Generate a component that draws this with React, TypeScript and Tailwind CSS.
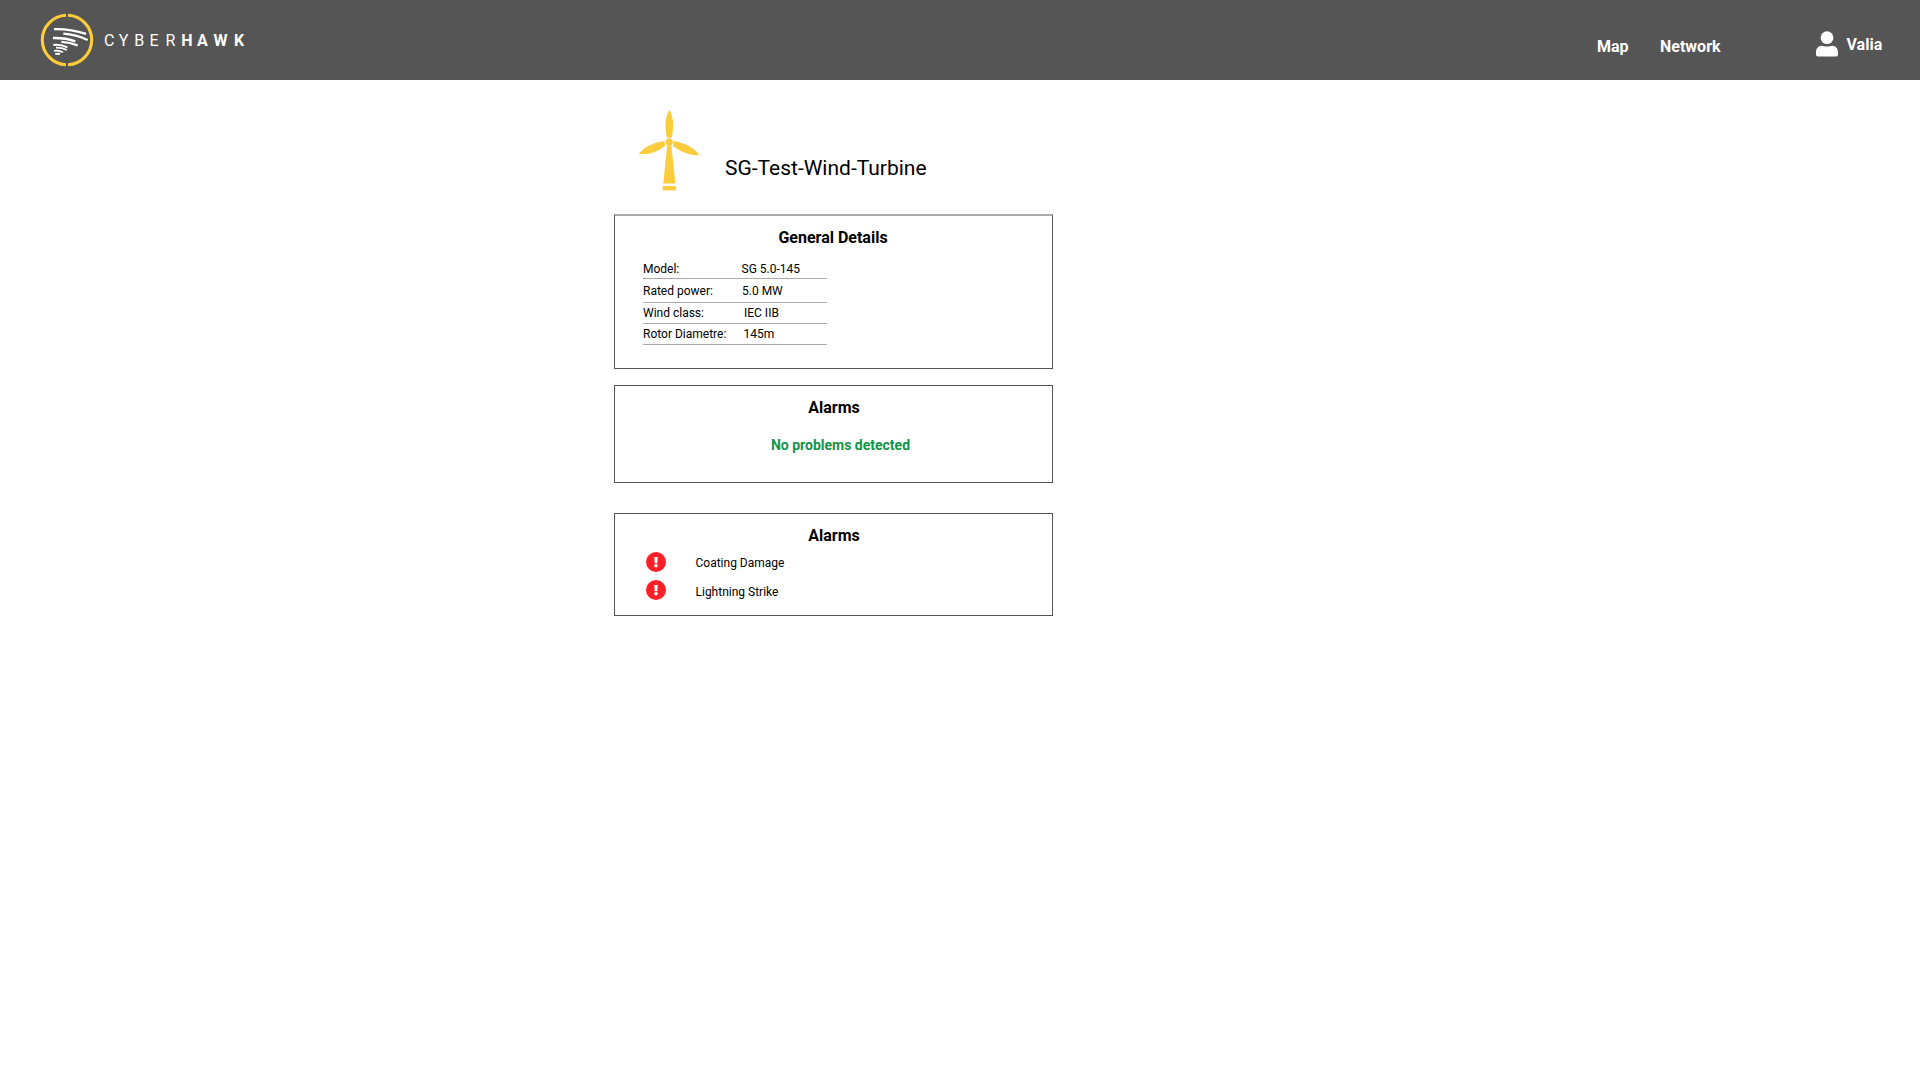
import React from "react";

const details = [
  { label: "Model:", value: "SG 5.0-145", row: "h-[18px]", gap: "ml-[98.5px]" },
  { label: "Rated power:", value: "5.0 MW", row: "h-6 pt-[4px]", gap: "ml-[99px]" },
  { label: "Wind class:", value: "IEC IIB", row: "h-[21px] pt-[2px]", gap: "ml-[101px]" },
  { label: "Rotor Diametre:", value: "145m", row: "h-[21px] pt-[2px]", gap: "ml-[100.5px]" },
];

function Logo() {
  return (
    <svg width="220" height="60" viewBox="0 0 220 60" className="ml-10 mt-[10px] shrink-0">
      <g fill="none" stroke="#ffcb38" strokeWidth="3.1">
        <path d="M26 5.320A24.7 24.7 0 0 0 26 54.680" />
        <path d="M28 5.320A24.7 24.7 0 0 1 28 54.680" />
      </g>
      <g fill="none" stroke="#fff" strokeWidth="2.3">
        <path d="M14 19.100Q30 18.600 46 23.800" />
        <path d="M23.300 23.600Q36 24.400 47.600 30" />
        <path d="M13 28Q26 27.800 35.400 31.400" />
        <path d="M21.400 31.800Q30 32.200 37.600 35.400" />
        <path d="M13.300 34.900Q21 34.200 27.400 37.300" strokeWidth="2" />
        <path d="M16 37.700Q22 37.600 26.800 40" strokeWidth="1.8" />
        <path d="M14 40.800Q19 40 23 42.300" strokeWidth="1.8" />
        <path d="M15.200 44.200Q17.500 43.400 20 44" strokeWidth="1.9" />
      </g>
      <g fill="#fff" fontFamily="Roboto, sans-serif" fontSize="16">
        <text y="35.800" x="64 78.700 94.200 109.400 125.500" fontWeight="400">CYBER</text>
        <text y="35.800" x="141.200 156.900 173.600 194" fontWeight="700">HAWK</text>
      </g>
    </svg>
  );
}

function Turbine() {
  return (
    <svg width="62" height="82" viewBox="0.2 -0.5 62 82" fill="#fbcc3b">
      <path d="M30.600 0.200C27.200 6 25.300 15 28 28.200H33C35.700 15 34 6 30.600 0.200Z" />
      <path d="M25.400 31.600C13 33.500 3.500 39 0 44.600C9 45.800 19.500 42 26.600 36.300Z" />
      <path d="M35.200 31.600C47 33.500 56.500 39.500 60.600 45.600C51 46.400 41 42 34 36.300Z" />
      <circle cx="30.400" cy="32.600" r="3.700" />
      <path d="M28.400 36H32.600L36.600 74H24.500Z" />
      <path d="M24 76.600H37V81H24Z" />
    </svg>
  );
}

function UserIcon() {
  return (
    <svg width="22" height="26" viewBox="0 0 22 26" fill="#fff">
      <circle cx="11" cy="6.700" r="6.400" />
      <path d="M0 21.300C0 17.500 2.300 14.700 5.700 14.700C7.500 14.700 8.700 15.600 11 15.600S14.500 14.700 16.300 14.700C19.700 14.700 22 17.500 22 21.300V23.800Q22 25.600 20.200 25.600H1.800Q0 25.600 0 23.800Z" />
    </svg>
  );
}

function AlertIcon() {
  return (
    <svg width="20" height="20" viewBox="0 0 20 20" className="shrink-0">
      <circle cx="10" cy="10" r="10" fill="#ff1f26" />
      <path d="M8.300 5H11.700L11.300 11.200H8.700Z" fill="#fff" />
      <circle cx="10" cy="13.800" r="1.800" fill="#fff" />
    </svg>
  );
}

export default function App() {
  return (
    <div className="min-h-screen bg-white font-[Roboto,sans-serif] text-black">
      <header className="flex h-20 items-start bg-[#555555] text-base font-bold text-white">
        <Logo />
        <nav className="ml-auto mt-[35px] flex">
          <a className="w-[63px]">Map</a>
          <a className="w-[156px]">Network</a>
        </nav>
        <div className="mt-[31px] flex w-[104px] items-start">
          <UserIcon />
          <span className="ml-[8.5px] mt-[2px]">Valia</span>
        </div>
      </header>

      <main className="ml-[614px] w-[439px]">
        <div className="flex h-[134px] items-start">
          <div className="ml-[25px] mt-[29px]">
            <Turbine />
          </div>
          <h1 className="ml-[24px] mt-[74px] text-[21px] leading-7">SG-Test-Wind-Turbine</h1>
        </div>

        <section className="h-[155px] border border-t-2 border-[#555555] border-t-[#aaaaaa] pt-[10px]">
          <h2 className="pr-px text-center text-base leading-6 font-bold">General Details</h2>
          <dl className="ml-7 mt-[11px] w-[184px] text-xs leading-4">
            {details.map((d) => (
              <div key={d.label} className={`flex border-b border-[#aaaaaa] ${d.row}`}>
                <dt className="w-0 whitespace-nowrap">{d.label}</dt>
                <dd className={d.gap}>{d.value}</dd>
              </div>
            ))}
          </dl>
        </section>

        <section className="mt-4 h-[98px] border border-[#555555] pt-[10px]">
          <h2 className="pl-px text-center text-base leading-6 font-bold">Alarms</h2>
          <p className="mt-[15px] pl-[14px] text-center text-sm leading-5 font-bold text-[#119447]">
            No problems detected
          </p>
        </section>

        <section className="mt-[30px] h-[103px] border border-[#555555] pt-[10px]">
          <h2 className="pl-px text-center text-base leading-6 font-bold">Alarms</h2>
          <ul className="ml-[31px] mt-[4px] flex flex-col gap-2 text-xs leading-4">
            <li className="flex h-5 items-start">
              <AlertIcon />
              <span className="ml-[29.5px] mt-[3px]">Coating Damage</span>
            </li>
            <li className="flex h-5 items-start">
              <AlertIcon />
              <span className="ml-[29.5px] mt-[4px]">Lightning Strike</span>
            </li>
          </ul>
        </section>
      </main>
    </div>
  );
}
